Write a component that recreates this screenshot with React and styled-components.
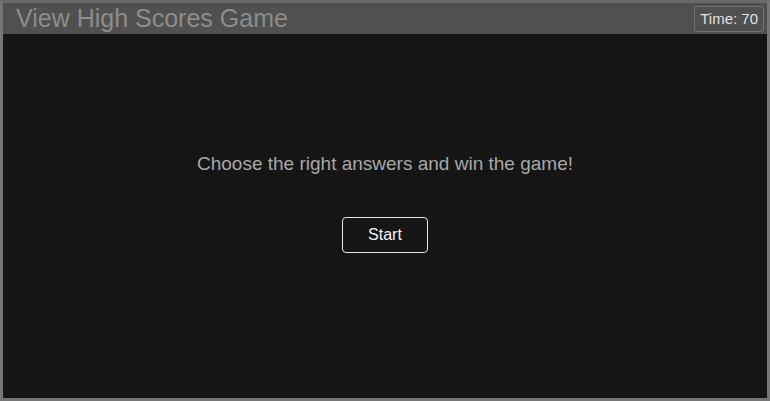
import React from "react";
import styled, { createGlobalStyle } from "styled-components";

const Global = createGlobalStyle`
  html, body { margin: 0; padding: 0; background: #151515; }
  #root { height: 100vh; }
  * { box-sizing: border-box; }
`;

const Frame = styled.div`
  height: 100vh;
  width: 100vw;
  border: 3px solid #767676;
  border-top-color: #6a6a6a;
  background: #151515;
  display: flex;
  flex-direction: column;
  font-family: "Liberation Sans", Arial, sans-serif;
`;

const Header = styled.header`
  height: 31px;
  background: #505050;
  display: flex;
  align-items: center;
  justify-content: space-between;
  padding: 0 3px 0 13px;
`;

const Title = styled.h1`
  margin: 0;
  font-size: 25px;
  font-weight: normal;
  color: #8c8c8c;
  line-height: 31px;
`;

const Timer = styled.div`
  height: 26px;
  padding: 0 5px;
  border: 1px solid #747474;
  border-radius: 3px;
  color: #e0e0e0;
  font-size: 15px;
  display: flex;
  align-items: center;
`;

const Body = styled.main`
  flex: 1;
  display: flex;
  flex-direction: column;
  align-items: center;
  padding-top: 119px;
`;

const Prompt = styled.p`
  margin: 0;
  font-size: 19px;
  color: #a8a8a8;
  line-height: 22px;
`;

const StartButton = styled.button`
  margin-top: 42px;
  width: 86px;
  height: 36px;
  background: transparent;
  border: 1px solid #e6e6e6;
  border-radius: 4px;
  color: #f2f2f2;
  font-family: "Liberation Sans", Arial, sans-serif;
  font-size: 16px;
  cursor: pointer;
`;

export default function App() {
  return (
    <>
      <Global />
      <Frame>
        <Header>
          <Title>View High Scores Game</Title>
          <Timer>Time: 70</Timer>
        </Header>
        <Body>
          <Prompt>Choose the right answers and win the game!</Prompt>
          <StartButton>Start</StartButton>
        </Body>
      </Frame>
    </>
  );
}
